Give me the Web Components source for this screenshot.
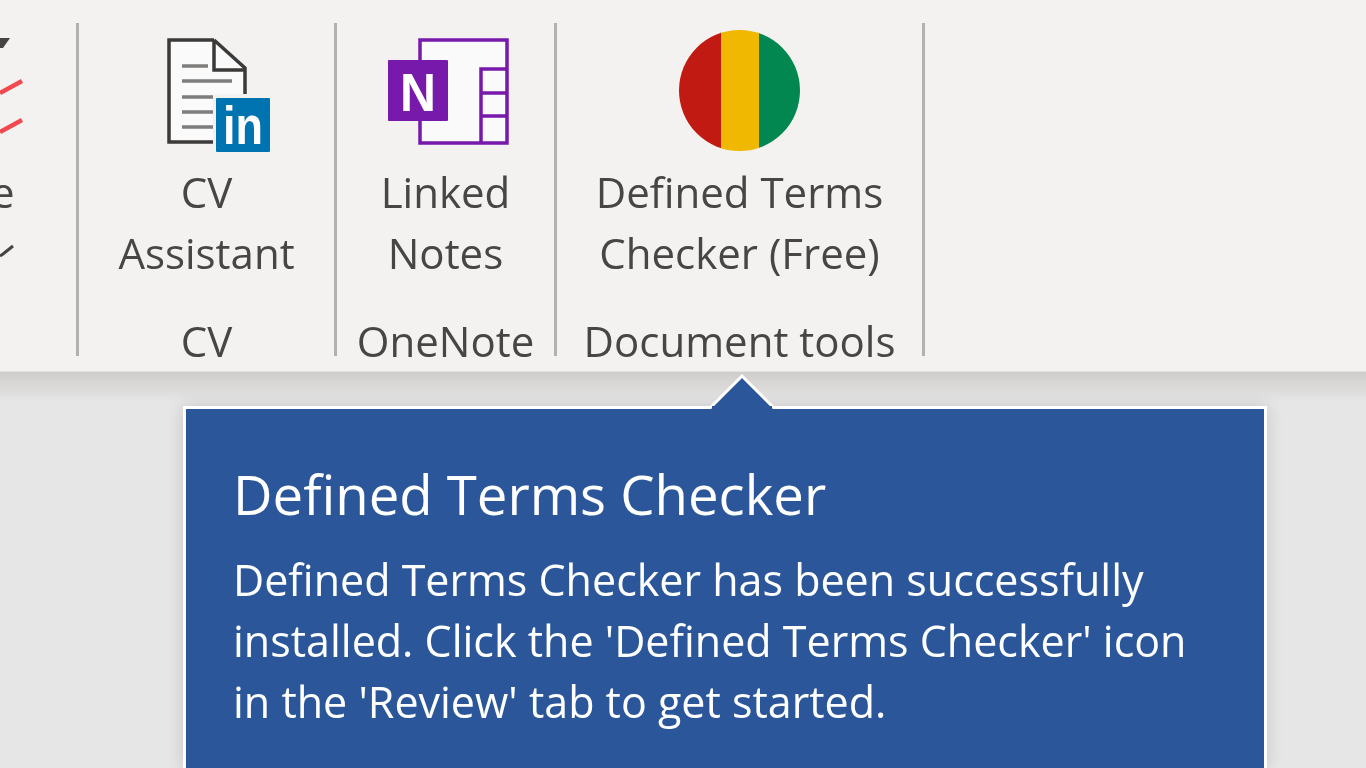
<!DOCTYPE html>
<html lang="en">
<head>
<meta charset="utf-8">
<title>Defined Terms Checker</title>
<style>
  html, body { margin: 0; height: 100%; overflow: hidden; }
  body {
    font-family: "Open Sans", "Liberation Sans", sans-serif;
    background: linear-gradient(#cfcdcb, #e6e6e6) 0 372px / 100% 30px no-repeat #e6e6e6;
  }
</style>
</head>
<body>
<office-ribbon>
  <ribbon-group width="76" clip>
    <ribbon-button clip>
      <svg slot="icon" width="76" height="114" viewBox="0 0 76 114">
        <path d="M0 0 L10 0 L3 10 L0 10 Z" fill="#444"/>
        <path d="M0 55 L22 43 M0 94 L22 82" stroke="#f04a50" stroke-width="4.5" fill="none"/>
      </svg>
      <span class="cut">e</span>
      <svg width="76" height="40" viewBox="0 0 76 40">
        <path d="M0 33 L3 31 L13 23" stroke="#444" stroke-width="3" fill="none"/>
      </svg>
    </ribbon-button>
  </ribbon-group>
  <ribbon-group width="255" label="CV">
    <ribbon-button>
      <svg slot="icon" width="104" height="114" viewBox="0 0 104 114" style="margin-left:24px; overflow:visible">
        <path d="M2 2 H47 L78 32 V104 H2 Z" fill="#fafafa"/>
        <path d="M47 2 H2 V104 H47" fill="none" stroke="#3b3a39" stroke-width="3.5"/>
        <path d="M47 2 L78 30 V57 M47 2 V32 H78" fill="#fafafa" stroke="#3b3a39" stroke-width="3.5"/>
        <path d="M15 28 H41 M15 43 H65 M15 59 H50 M15 74 H46 M15 89 H46" stroke="#7f7d7b" stroke-width="3.5"/>
        <rect x="46" y="56" width="58" height="58" fill="#f3f2f1"/>
        <rect x="49" y="60" width="54" height="54" rx="1" fill="#0073b1"/>
        <text x="56" y="106" font-family="'Liberation Sans', sans-serif" font-weight="700" font-size="53" fill="#fff" textLength="40" lengthAdjust="spacingAndGlyphs">in</text>
      </svg>
      <span>CV</span>
      <span>Assistant</span>
    </ribbon-button>
  </ribbon-group>
  <ribbon-group width="217" label="OneNote">
    <ribbon-button>
      <svg slot="icon" width="122" height="114" viewBox="0 0 122 114" style="margin-left:5px">
        <rect x="33" y="2" width="87" height="103" fill="#fafafa" stroke="#7719aa" stroke-width="3.5"/>
        <path d="M94 105 V31 H120 M94 55 H120 M94 78 H120" fill="none" stroke="#7719aa" stroke-width="3.5"/>
        <rect x="1" y="22" width="60" height="61" rx="1" fill="#7719aa"/>
        <text x="31" y="73" text-anchor="middle" font-family="'Liberation Sans', sans-serif" font-weight="700" font-size="54" fill="#fff" textLength="36" lengthAdjust="spacingAndGlyphs">N</text>
      </svg>
      <span>Linked</span>
      <span>Notes</span>
    </ribbon-button>
  </ribbon-group>
  <ribbon-group width="365" label="Document tools">
    <ribbon-button>
      <svg slot="icon" width="122" height="122" viewBox="0 0 122 122" style="margin-top:-8px">
        <defs><clipPath id="disc"><circle cx="60.5" cy="60.5" r="60.5"/></clipPath></defs>
        <g clip-path="url(#disc)">
          <rect x="0" y="0" width="42" height="122" fill="#c01a13"/>
          <rect x="42" y="0" width="38" height="122" fill="#f0b800"/>
          <rect x="80" y="0" width="42" height="122" fill="#038750"/>
        </g>
      </svg>
      <span>Defined Terms</span>
      <span>Checker (Free)</span>
    </ribbon-button>
  </ribbon-group>
</office-ribbon>
<callout-box heading="Defined Terms Checker">
  Defined Terms Checker has been successfully<br>
  installed. Click the 'Defined Terms Checker' icon<br>
  in the 'Review' tab to get started.
</callout-box>

<script>
class OfficeRibbon extends HTMLElement {
    constructor() {
        super();
        this.attachShadow({ mode: 'open' });
    }

    connectedCallback() {
        this.shadowRoot.innerHTML = `
            <style>
                :host {
                    display: flex;
                    box-sizing: border-box;
                    height: 372px;
                    padding-top: 23px;
                    background: #f3f2f1;
                    border-bottom: 1px solid #e4e2e0;
                    color: #484644;
                    filter: blur(0.6px);
                }
            </style>
            <slot></slot>
        `;
    }
}

class RibbonGroup extends HTMLElement {
    constructor() {
        super();
        this.attachShadow({ mode: 'open' });
    }

    connectedCallback() {
        const width = this.getAttribute('width');
        const label = this.getAttribute('label') || '';
        this.shadowRoot.innerHTML = `
            <style>
                :host {
                    display: flex;
                    flex-direction: column;
                    width: ${width}px;
                    height: 333px;
                    border-right: 3px solid #b3b0ad;
                }
                :host([clip]) { overflow: hidden; }
                .body { flex: 1; display: flex; justify-content: center; }
                .label {
                    height: 28px;
                    line-height: 26px;
                    font-size: 42px;
                    text-align: center;
                    white-space: nowrap;
                }
            </style>
            <div class="body"><slot></slot></div>
            <div class="label">${label}</div>
        `;
    }
}

class RibbonButton extends HTMLElement {
    constructor() {
        super();
        this.attachShadow({ mode: 'open' });
    }

    connectedCallback() {
        this.shadowRoot.innerHTML = `
            <style>
                :host {
                    display: flex;
                    flex-direction: column;
                    align-items: center;
                    padding-top: 15px;
                    font-size: 42px;
                    line-height: 60.5px;
                    white-space: nowrap;
                }
                :host([clip]) { align-items: flex-start; width: 100%; }
                .icon { display: flex; height: 114px; margin-bottom: 10px; align-items: flex-start; }
                ::slotted(span) { display: block; }
                ::slotted(span.cut) { margin-left: -9px; }
                ::slotted(svg) { display: block; }
            </style>
            <div class="icon"><slot name="icon"></slot></div>
            <slot></slot>
        `;
    }
}

class CalloutBox extends HTMLElement {
    constructor() {
        super();
        this.attachShadow({ mode: 'open' });
    }

    connectedCallback() {
        const heading = this.getAttribute('heading');
        this.shadowRoot.innerHTML = `
            <style>
                :host {
                    display: block;
                    position: absolute;
                    left: 183px;
                    top: 406px;
                    width: 1084px;
                    height: 362px;
                    box-sizing: border-box;
                    padding: 52px 47px 0;
                    background: #2b579a;
                    border: 3px solid #fff;
                    border-bottom: 0;
                    box-shadow: 0 0 16px rgba(0, 0, 0, 0.14);
                    color: #fff;
                    font-size: 43px;
                    line-height: 61px;
                    white-space: nowrap;
                    filter: blur(0.5px);
                }
                h2 {
                    margin: 0 0 22px;
                    font-size: 54.5px;
                    line-height: 66px;
                    font-weight: 400;
                }
                .beak {
                    position: absolute;
                    left: 523px;
                    top: -36px;
                    width: 66px;
                    height: 36px;
                    display: block;
                }
            </style>
            <svg class="beak" viewBox="0 0 66 36">
                <path d="M0 36 L33 3 L66 36" fill="#2b579a" stroke="#fff" stroke-width="3"/>
                <rect x="3" y="33" width="60" height="4" fill="#2b579a"/>
            </svg>
            <h2>${heading}</h2>
            <slot></slot>
        `;
    }
}

customElements.define('office-ribbon', OfficeRibbon);
customElements.define('ribbon-group', RibbonGroup);
customElements.define('ribbon-button', RibbonButton);
customElements.define('callout-box', CalloutBox);
</script>
</body>
</html>
